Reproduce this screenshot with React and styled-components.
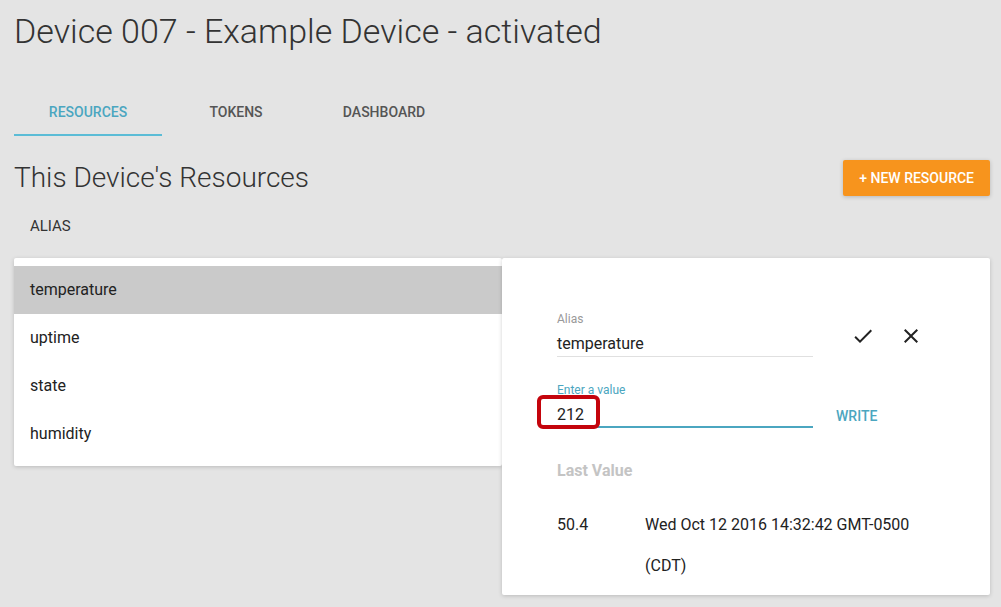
import React, { useState } from 'react';
import styled, { createGlobalStyle } from 'styled-components';

const GlobalStyle = createGlobalStyle`
  html, body {
    margin: 0;
    padding: 0;
    background: #e4e4e4;
    font-family: Roboto, "Liberation Sans", sans-serif;
    color: #222;
  }
`;

const Page = styled.div`
  width: 1001px;
  height: 607px;
  box-sizing: border-box;
  padding: 0 11px 0 14px;
  overflow: hidden;
`;

const Title = styled.h1`
  margin: 0;
  padding-top: 7px;
  height: 48px;
  font-size: 34px;
  font-weight: 300;
  color: #333;
  line-height: 48px;
`;

const Tabs = styled.div`
  display: flex;
  margin-top: 33px;
`;

const Tab = styled.div`
  width: 148px;
  height: 48px;
  box-sizing: border-box;
  padding-top: 1px;
  display: flex;
  align-items: center;
  justify-content: center;
  font-size: 14px;
  font-weight: 500;
  text-transform: uppercase;
  color: ${(p) => (p.active ? '#4ba6c0' : '#555')};
  border-bottom: 2px solid ${(p) => (p.active ? '#5bbcd6' : 'transparent')};
`;

const SectionHeader = styled.div`
  display: flex;
  justify-content: space-between;
  align-items: center;
  margin-top: 24px;
`;

const SectionTitle = styled.h2`
  margin: 0;
  font-size: 28px;
  font-weight: 300;
  color: #333;
  line-height: 36px;
`;

const OrangeButton = styled.button`
  height: 36px;
  padding: 0 16px;
  border: none;
  border-radius: 2px;
  background: #f7941d;
  color: #fff;
  font-family: inherit;
  font-size: 14px;
  font-weight: 500;
  text-transform: uppercase;
  box-shadow: 0 1px 4px rgba(0, 0, 0, 0.2);
`;

const ColumnLabel = styled.div`
  padding: 21px 16px 0;
  height: 45px;
  box-sizing: border-box;
  font-size: 15px;
  color: #333;
`;

const Columns = styled.div`
  display: grid;
  grid-template-columns: 488px 488px;
  margin-top: 17px;
  align-items: start;
`;

const Card = styled.div`
  background: #fff;
  border-radius: 2px;
  box-shadow: 0 1px 4px rgba(0, 0, 0, 0.18);
  position: relative;
`;

const List = styled(Card)`
  padding: 8px 0;
`;

const ListItem = styled.div`
  height: 48px;
  padding: 0 16px 1px;
  box-sizing: border-box;
  display: flex;
  align-items: center;
  font-size: 16px;
  color: #222;
  background: ${(p) => (p.selected ? '#cacaca' : '#fff')};
`;

const Detail = styled(Card)`
  height: 337px;
  padding: 54px 0 0 55px;
  box-sizing: border-box;
  z-index: 1;
`;

const FieldRow = styled.div`
  display: flex;
  align-items: flex-end;
  margin-bottom: ${(p) => p.gap || 0}px;
`;

const Field = styled.div`
  width: 256px;
  position: relative;
  border-bottom: ${(p) => (p.focused ? '2px solid #4ba6c0' : '1px solid #e0e0e0')};
  padding-bottom: ${(p) => (p.focused ? 1 : 2)}px;
`;

const FieldLabel = styled.div`
  font-size: 12px;
  color: ${(p) => (p.focused ? '#4ba6c0' : '#999')};
  margin-bottom: 8px;
`;

const FieldValue = styled.div`
  font-size: 16px;
  color: #222;
  line-height: 20px;
`;

const Highlight = styled.div`
  position: absolute;
  left: -20px;
  top: 12px;
  width: 63px;
  height: 34px;
  box-sizing: border-box;
  border: 4px solid #c4040c;
  border-radius: 6px;
`;

const IconButton = styled.button`
  width: 48px;
  height: 40px;
  border: none;
  background: none;
  padding: 0;
  display: flex;
  align-items: center;
  justify-content: center;
  color: #222;
`;

const IconGroup = styled.div`
  display: flex;
  margin-left: 26px;
  margin-bottom: 1px;
`;

const TextButton = styled.button`
  border: none;
  background: none;
  margin-left: 23px;
  padding: 0;
  height: 24px;
  font-family: inherit;
  font-size: 14px;
  font-weight: 500;
  color: #4ba6c0;
  text-transform: uppercase;
`;

const LastValueTitle = styled.div`
  margin-top: 33px;
  font-size: 16px;
  font-weight: 700;
  color: #c4c4c4;
`;

const ValueTable = styled.div`
  display: grid;
  grid-template-columns: 88px 280px;
  margin-top: 24px;
  font-size: 16px;
  line-height: 41px;
  color: #222;
`;

const CheckIcon = () => (
  <svg width="24" height="24" viewBox="0 0 24 24">
    <path d="M9 16.17L4.83 12l-1.42 1.41L9 19 21 7l-1.41-1.41z" fill="currentColor" />
  </svg>
);

const CloseIcon = () => (
  <svg width="24" height="24" viewBox="0 0 24 24">
    <path
      d="M19 6.41L17.59 5 12 10.59 6.41 5 5 6.41 10.59 12 5 17.59 6.41 19 12 13.41 17.59 19 19 17.59 13.41 12z"
      fill="currentColor"
    />
  </svg>
);

const resources = ['temperature', 'uptime', 'state', 'humidity'];
const tabs = ['Resources', 'Tokens', 'Dashboard'];

const App = () => {
  const [selected, setSelected] = useState('temperature');
  const [activeTab, setActiveTab] = useState('Resources');

  return (
    <Page>
      <GlobalStyle />
      <Title>Device 007 - Example Device - activated</Title>
      <Tabs>
        {tabs.map((t) => (
          <Tab key={t} active={t === activeTab} onClick={() => setActiveTab(t)}>
            {t}
          </Tab>
        ))}
      </Tabs>
      <SectionHeader>
        <SectionTitle>This Device's Resources</SectionTitle>
        <OrangeButton>+ New Resource</OrangeButton>
      </SectionHeader>
      <ColumnLabel>ALIAS</ColumnLabel>
      <Columns>
        <List>
          {resources.map((r) => (
            <ListItem key={r} selected={r === selected} onClick={() => setSelected(r)}>
              {r}
            </ListItem>
          ))}
        </List>
        <Detail>
          <FieldRow gap={26}>
            <Field>
              <FieldLabel>Alias</FieldLabel>
              <FieldValue>{selected}</FieldValue>
            </Field>
            <IconGroup>
              <IconButton><CheckIcon /></IconButton>
              <IconButton><CloseIcon /></IconButton>
            </IconGroup>
          </FieldRow>
          <FieldRow>
            <Field focused>
              <FieldLabel focused>Enter a value</FieldLabel>
              <FieldValue>212</FieldValue>
              <Highlight />
            </Field>
            <TextButton>Write</TextButton>
          </FieldRow>
          <LastValueTitle>Last Value</LastValueTitle>
          <ValueTable>
            <span>50.4</span>
            <span>Wed Oct 12 2016 14:32:42 GMT-0500 (CDT)</span>
          </ValueTable>
        </Detail>
      </Columns>
    </Page>
  );
};

export default App;
